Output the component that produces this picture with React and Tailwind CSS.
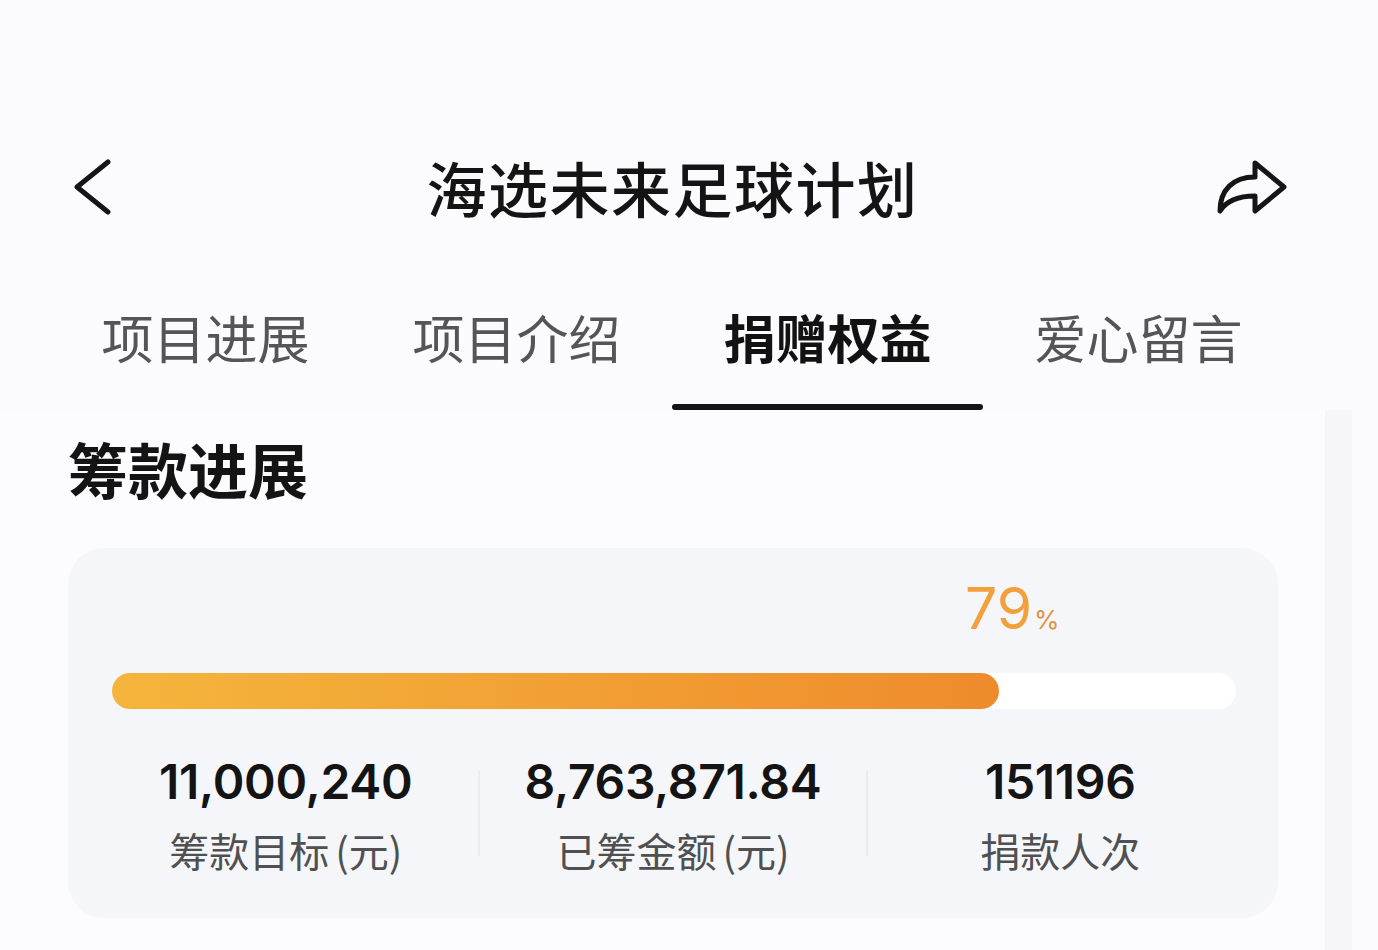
import React from "react";

const CJK = { fontFamily: '"Noto Sans CJK SC", "Noto Sans", sans-serif' };
const NUM = { fontFamily: 'Inter, "Noto Sans", sans-serif' };

function BackIcon() {
  return (
    <svg width="40" height="56" viewBox="0 0 40 56" fill="none">
      <polyline points="36,3 5,28 36,53" stroke="#151515" strokeWidth="5" strokeLinecap="round" strokeLinejoin="round" />
    </svg>
  );
}

function ShareIcon() {
  return (
    <svg width="74" height="58" viewBox="0 0 74 58" fill="none">
      <path
        d="M40 5 L69 29 L40 53 L40 38 C24 38 12 42 5 53 C5 32 18 19 40 19 Z"
        stroke="#151515"
        strokeWidth="5"
        strokeLinejoin="round"
        strokeLinecap="round"
      />
    </svg>
  );
}

const tabs = ["项目进展", "项目介绍", "捐赠权益", "爱心留言"];

function Stat({ value, label, unit }) {
  return (
    <div className="flex-1 flex flex-col items-center">
      <div className="text-[48px] leading-[60px] font-semibold text-[#141414] tracking-[-0.3px]" style={NUM}>
        {value}
      </div>
      <div className="mt-[14px] text-[40px] leading-[48px] text-[#505050] flex" style={CJK}>
        <span>{label}</span>
        {unit && <span className="ml-[6px]">{unit}</span>}
      </div>
    </div>
  );
}

export default function App() {
  return (
    <div className="w-[1378px] h-[950px] bg-[#fbfbfd] overflow-hidden" style={CJK}>
      {/* Header */}
      <div className="pt-[127px] w-[1345px] pl-[72px] pr-[56px] h-[247px] grid grid-cols-[1fr_auto_1fr] items-center">
        <div className="flex items-center">
          <BackIcon />
        </div>
        <div className="mr-[16px] text-[60px] leading-none font-medium text-[#141414] tracking-[1.5px]">海选未来足球计划</div>
        <div className="flex justify-end items-center">
          <ShareIcon />
        </div>
      </div>

      {/* Tabs */}
      <div className="ml-[50px] w-[1244px] grid grid-cols-4 h-[163px]">
        {tabs.map((t, i) => (
          <div key={t} className="flex flex-col items-center pt-[60px]">
            <div
              className={
                "text-[52px] leading-[60px] " +
                (i === 2 ? "font-bold text-[#121212]" : "text-[#555558]")
              }
            >
              {t}
            </div>
            <div className={"mt-[37px] h-[6px] w-full rounded-sm " + (i === 2 ? "bg-[#141414]" : "bg-transparent")} />
          </div>
        ))}
      </div>

      {/* Lower sheet */}
      <div className="flex">
        <div className="w-[1325px] bg-[#fcfcfe] pl-[68px] pt-[28px]">
          <div className="text-[60px] leading-none font-bold text-[#141414]">筹款进展</div>

          <div className="mt-[50px] w-[1210px] h-[370px] rounded-[36px] bg-[#f5f6fa] px-[25px] pt-[32px]">
            <div className="pl-[19px] pr-[17px]">
              <div className="pl-[853px] h-[62px] flex items-baseline text-[#f2a03c]" style={NUM}>
                <span className="text-[57px] leading-none font-normal">79</span>
                <span className="text-[26px] leading-none font-normal text-[#e09248] ml-[2px]">%</span>
              </div>
              <div className="mt-[31px] h-[36px] rounded-full bg-white">
                <div
                  className="h-full rounded-full bg-linear-to-r from-[#f4b53c] to-[#ee8b2c]"
                  style={{ width: "78.9%" }}
                />
              </div>
            </div>

            <div className="mt-[43px] flex items-center">
              <Stat value="11,000,240" label="筹款目标" unit="(元)" />
              <div className="w-[2px] h-[85px] bg-[#ebebef]" />
              <Stat value="8,763,871.84" label="已筹金额" unit="(元)" />
              <div className="w-[2px] h-[85px] bg-[#ebebef]" />
              <Stat value="151196" label="捐款人次" />
            </div>
          </div>
        </div>
        <div className="w-[27px] h-[545px] bg-[#f6f6f9]" />
        <div className="flex-1 bg-[#fbfbfd]" />
      </div>
    </div>
  );
}
